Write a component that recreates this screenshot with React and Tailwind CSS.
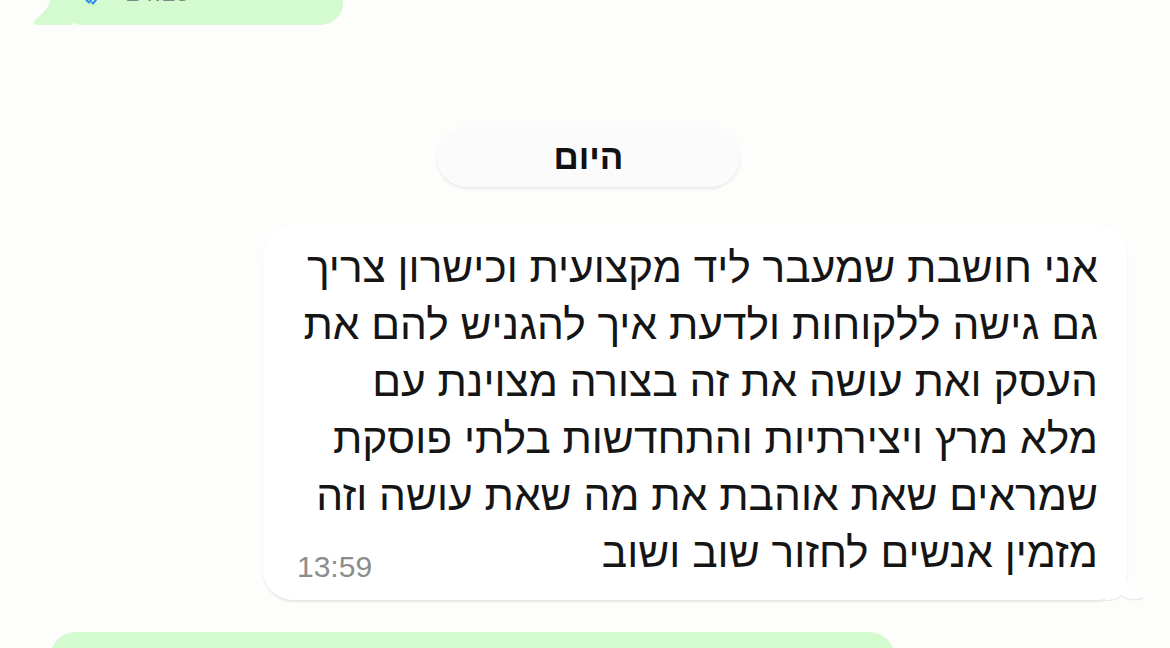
import React from "react";

const lines = [
  "אני חושבת שמעבר ליד מקצועית וכישרון צריך",
  "גם גישה ללקוחות ולדעת איך להגניש להם את",
  "העסק ואת עושה את זה בצורה מצוינת עם",
  "מלא מרץ ויצירתיות והתחדשות בלתי פוסקת",
  "שמראים שאת אוהבת את מה שאת עושה וזה",
  "מזמין אנשים לחזור שוב ושוב",
];

function DoubleTick() {
  return (
    <svg width="18" height="12" viewBox="0 0 18 12" fill="none" stroke="#2a8cf0" strokeWidth="2" strokeLinecap="round" strokeLinejoin="round">
      <path d="M1 6.5l3 3L10 2" />
      <path d="M7 9.5L8 10.5 15 2" />
    </svg>
  );
}

export default function App() {
  return (
    <div
      className="w-[1170px] h-[648px] overflow-hidden bg-[#fdfdfb] flex flex-col"
      style={{ fontFamily: '"Liberation Sans", Arial, sans-serif' }}
    >
      {/* outgoing bubble, scrolled mostly out of view */}
      <div className="relative shrink-0 ml-[60px] -mt-[45px] w-[283px] h-[70px] rounded-[22px] bg-[#d3fbcf] flex items-end px-[25px] pb-[20px] gap-[22px]">
        <svg className="absolute -left-[28px] bottom-0" width="40" height="26" viewBox="0 0 40 26">
          <path d="M40 0 L40 26 L6 26 C2 26 0 24 4 20 C14 12 18 6 18 0 Z" fill="#d3fbcf" />
        </svg>
        <DoubleTick />
        <span className="text-[26px] leading-none text-[#7d8a7d]">14:15</span>
      </div>

      {/* date separator */}
      <div className="shrink-0 self-start ml-[437px] mt-[102px] w-[303px] h-[60px] rounded-[30px] bg-[#fbfbfb] shadow-[0_2px_3px_rgba(0,0,0,0.08)] flex items-center justify-center">
        <span dir="rtl" className="text-[35px] font-bold text-[#111]">היום</span>
      </div>

      {/* incoming message */}
      <div className="relative shrink-0 ml-[263px] mt-[38px] w-[864px] h-[375px] rounded-[30px] bg-white shadow-[0_2px_2px_rgba(0,0,0,0.09)] pt-[14px] pr-[29px]">
        <svg className="absolute -right-[18px] -bottom-[1px]" width="40" height="40" viewBox="0 0 40 40">
          <path d="M0 0 L14 0 C16 16 24 30 38 37 C32 40 22 39 16 35 C10 39 4 40 0 40 Z" fill="#ffffff" />
          <path d="M38 37 C32 40 22 39 16 35 C10 39 4 40 0 40" fill="none" stroke="rgba(0,0,0,0.08)" strokeWidth="1.5" />
        </svg>
        <div dir="rtl" className="relative text-[42.5px] leading-[57px] text-[#151515]">
          {lines.map((l) => (
            <div key={l} className="whitespace-nowrap">{l}</div>
          ))}
        </div>
        <span className="absolute left-[34px] bottom-[18px] text-[30px] leading-none text-[#8c8c8c]">13:59</span>
      </div>

      {/* next outgoing bubble */}
      <div className="shrink-0 ml-[50px] mt-[32px] w-[845px] h-[80px] rounded-[26px] bg-[#d3fbcf]" />
    </div>
  );
}
